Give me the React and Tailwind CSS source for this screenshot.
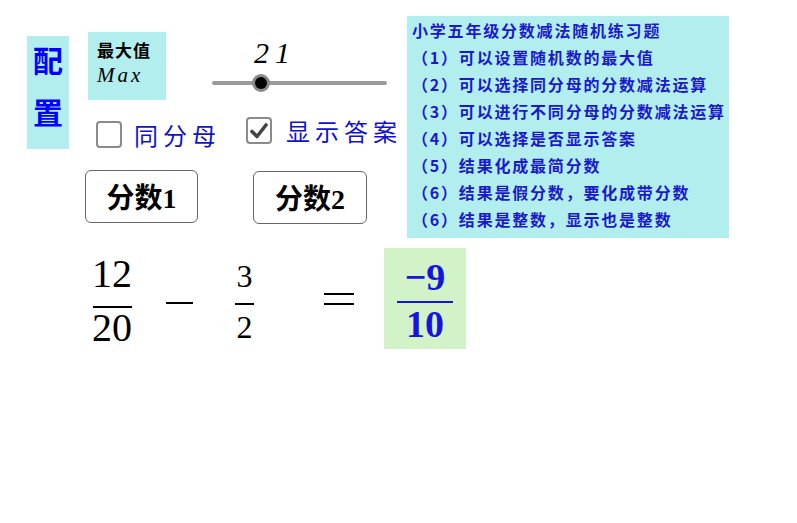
import React from "react";

const cjk = "font-['Noto_Sans_CJK_SC',sans-serif]";
const serif = "font-['Liberation_Serif',serif]";
const mixed = "font-['Liberation_Serif','Noto_Sans_CJK_SC',serif]";

const notes = [
  "（1）可以设置随机数的最大值",
  "（2）可以选择同分母的分数减法运算",
  "（3）可以进行不同分母的分数减法运算",
  "（4）可以选择是否显示答案",
  "（5）结果化成最简分数",
  "（6）结果是假分数，要化成带分数",
  "（6）结果是整数，显示也是整数",
];

function Checkbox({ checked }) {
  return (
    <div className="w-[26px] h-[27px] rounded-[4px] border-2 border-[#8a8a8a] bg-white flex items-center justify-center">
      {checked && (
        <svg width="20" height="18" viewBox="0 0 20 18">
          <path d="M3 9.5 L8 14.5 L17 3" fill="none" stroke="#444" strokeWidth="3.6" strokeLinecap="round" strokeLinejoin="round" />
        </svg>
      )}
    </div>
  );
}

// numerator / bar / denominator, gaps given as tailwind classes
function Fraction({ top, bottom, size, barWidth, gapTop, gapBottom, className = "" }) {
  return (
    <div className={`flex flex-col items-center ${className}`}>
      <div className={`${size} leading-none`}>{top}</div>
      <div className={`h-[2px] ${barWidth} bg-current ${gapTop} ${gapBottom}`}></div>
      <div className={`${size} leading-none`}>{bottom}</div>
    </div>
  );
}

export default function App() {
  return (
    <div className="w-[797px] h-[523px] bg-white overflow-hidden text-black">
      <div className="flex items-start pt-4">
        {/* 配置 label */}
        <div className={`ml-[27px] mt-5 w-[42px] h-[113px] bg-[#b2eeee] flex flex-col items-center pt-[8px] gap-[22px] text-[30px] leading-none font-bold text-[#0000ff] ${cjk}`}>
          <span>配</span>
          <span>置</span>
        </div>

        {/* controls */}
        <div className="ml-4 w-[322px] flex flex-col">
          <div className="flex items-start mt-4">
            <div className="ml-[3px] w-[78px] h-[68px] bg-[#b2eeee] pl-[9px] pt-[9px]">
              <div className={`text-[17px] leading-none font-bold tracking-[1px] ${cjk}`}>最大值</div>
              <div className={`mt-[7px] text-[21px] leading-none italic tracking-[3px] ${serif}`}>Max</div>
            </div>
            <div className="ml-[46px] w-[175px] flex flex-col">
              <div className={`ml-[42px] mt-[6px] h-[30px] text-[30px] leading-none italic tracking-[6px] ${serif}`}>21</div>
              <div className="relative mt-[13px] h-[4px] rounded-full bg-[#9a9a9a]">
                <div className="absolute left-[40px] top-[-7px] w-[18px] h-[18px] rounded-full bg-[#8a8a8a] flex items-center justify-center">
                  <div className="w-[12px] h-[12px] rounded-full bg-black"></div>
                </div>
              </div>
            </div>
          </div>

          <div className="flex items-start mt-[17px] text-[24px] leading-none text-[#1010d0]">
            <div className="ml-[11px] mt-[4px] flex items-center">
              <Checkbox />
              <span className={`ml-[12px] mt-[1px] tracking-[5px] ${cjk}`}>同分母</span>
            </div>
            <div className="ml-[25px] flex items-center">
              <Checkbox checked />
              <span className={`ml-[14px] tracking-[5px] ${cjk}`}>显示答案</span>
            </div>
          </div>

          <div className={`flex items-start mt-[22px] text-[28px] leading-none font-bold ${mixed}`}>
            <button className="w-[113px] h-[53px] pt-[4px] rounded-[6px] border-[1.5px] border-[#666] bg-white flex items-center justify-center">
              分数1
            </button>
            <button className="ml-[55px] mt-[1px] w-[114px] h-[53px] pt-[4px] rounded-[6px] border-[1.5px] border-[#666] bg-white flex items-center justify-center">
              分数2
            </button>
          </div>
        </div>

        {/* notes */}
        <div className={`w-[322px] h-[222px] bg-[#b2eeee] pl-[5px] pt-[1px] text-[16px] leading-[27px] font-bold text-[#1a1acc] ${cjk}`}>
          <div className="tracking-[1.8px]">小学五年级分数减法随机练习题</div>
          {notes.map((n, i) => (
            <div key={i} className="tracking-[1.8px]">{n}</div>
          ))}
        </div>
      </div>

      {/* equation */}
      <div className={`flex items-start mt-[10px] ${serif}`}>
        <Fraction top="12" bottom="20" size="text-[40px]" barWidth="w-[39px]" gapTop="mt-[12px]" gapBottom="mb-0" className="ml-[92px] mt-[6px]" />
        <div className="ml-[34px] mt-[54px] w-[27px] h-[2px] bg-black"></div>
        <Fraction top="3" bottom="2" size="text-[32px]" barWidth="w-[19px]" gapTop="mt-[11px]" gapBottom="mb-[6px]" className="ml-[42px] mt-[12px]" />
        <div className="ml-[70px] mt-[45px] w-[30px] flex flex-col gap-[8px]">
          <div className="h-[2px] bg-black"></div>
          <div className="h-[2px] bg-black"></div>
        </div>
        <div className="ml-[30px] w-[82px] h-[101px] bg-[#d2f2c8] flex justify-center pt-[10px] text-[#1515e0] font-bold">
          <Fraction top="−9" bottom="10" size="text-[38px]" barWidth="w-[56px]" gapTop="mt-[5px]" gapBottom="mb-[2px]" />
        </div>
      </div>
    </div>
  );
}
